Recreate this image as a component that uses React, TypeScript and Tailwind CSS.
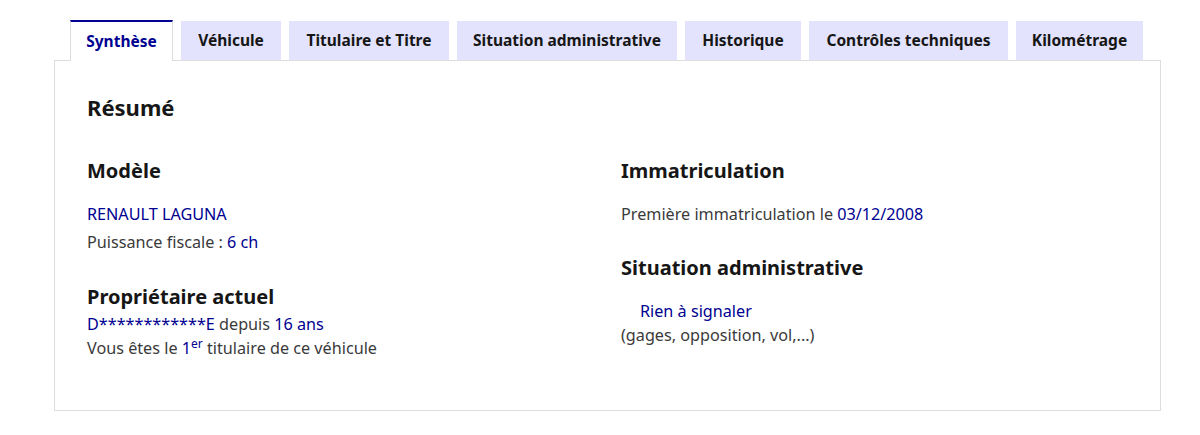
import React from "react";

const tabs: { label: string; w: string }[] = [
  { label: "Synthèse", w: "w-[103px]" },
  { label: "Véhicule", w: "w-[100px]" },
  { label: "Titulaire et Titre", w: "w-[160px]" },
  { label: "Situation administrative", w: "w-[220px]" },
  { label: "Historique", w: "w-[116px]" },
  { label: "Contrôles techniques", w: "w-[199px]" },
  { label: "Kilométrage", w: "w-[127px]" },
];

export default function App() {
  return (
    <div
      className="w-[1200px] h-[435px] bg-white text-[#3a3a3a]"
      style={{ fontFamily: '"Noto Sans", Arial, sans-serif' }}
    >
      <div className="pt-[20px] pl-[54px]">
        <div className="relative z-10 ml-[16px] flex items-end gap-2 mb-[-1px]">
          {tabs.map((t, i) =>
            i === 0 ? (
              <div
                key={t.label}
                className={`${t.w} h-[41px] flex items-center justify-center bg-white border-t-2 border-t-[#000091] border-x border-x-[#dddddd] text-[15.5px] font-bold text-[#000091] whitespace-nowrap`}
              >
                {t.label}
              </div>
            ) : (
              <div
                key={t.label}
                className={`${t.w} h-[39px] mb-[1px] flex items-center justify-center bg-[#e3e3fd] text-[15.5px] font-bold text-[#161616] whitespace-nowrap`}
              >
                {t.label}
              </div>
            )
          )}
        </div>
        <div className="w-[1107px] h-[351px] border border-[#dddddd] px-8 pt-8">
          <h3 className="text-[22px] leading-[28px] font-bold text-[#161616]">Résumé</h3>
          <div className="grid grid-cols-[534px_1fr] mt-[36px]">
            <div>
              <h4 className="text-[20px] leading-[28px] font-bold text-[#161616]">Modèle</h4>
              <p className="mt-[15px] text-[16.2px] leading-[28px] text-[#000091]">RENAULT LAGUNA</p>
              <p className="text-[16.2px] leading-[28px]">
                Puissance fiscale : <span className="text-[#000091]">6 ch</span>
              </p>
              <h4 className="mt-[27px] text-[20px] leading-[28px] font-bold text-[#161616]">
                Propriétaire actuel
              </h4>
              <p className="mt-[1px] text-[16.2px] leading-[24px]">
                <span className="text-[#000091]">D************E</span> depuis{" "}
                <span className="text-[#000091]">16 ans</span>
              </p>
              <p className="text-[16.2px] leading-[24px]">
                Vous êtes le{" "}
                <span className="text-[#000091]">
                  1<sup className="text-[12px]">er</sup>
                </span>{" "}
                titulaire de ce véhicule
              </p>
            </div>
            <div>
              <h4 className="text-[20px] leading-[28px] font-bold text-[#161616]">Immatriculation</h4>
              <p className="mt-[15px] text-[16.2px] leading-[28px]">
                Première immatriculation le <span className="text-[#000091]">03/12/2008</span>
              </p>
              <h4 className="mt-[26px] text-[20px] leading-[28px] font-bold text-[#161616]">
                Situation administrative
              </h4>
              <p className="mt-[17px] pl-[19px] text-[16.2px] leading-[24px] text-[#000091]">Rien à signaler</p>
              <p className="text-[16.2px] leading-[24px]">(gages, opposition, vol,...)</p>
            </div>
          </div>
        </div>
      </div>
    </div>
  );
}
